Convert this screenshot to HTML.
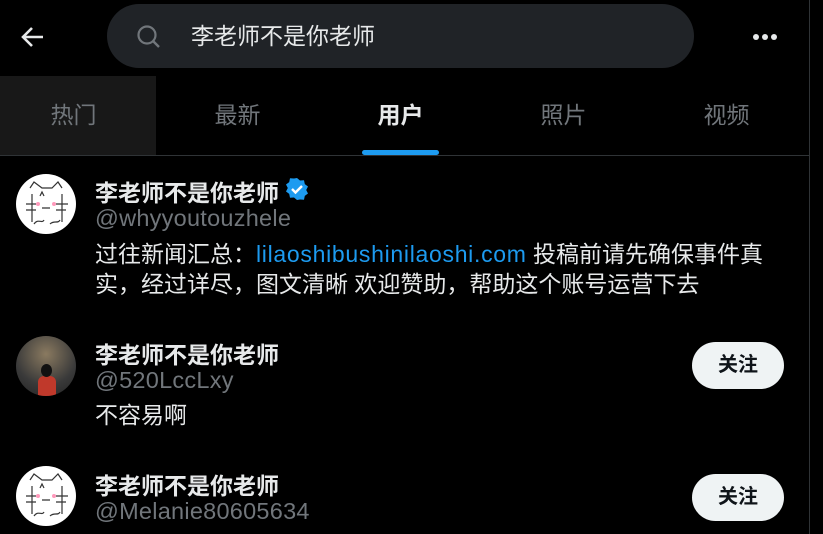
<!DOCTYPE html>
<html><head><meta charset="utf-8"><style>
*{margin:0;padding:0;box-sizing:border-box}
body{width:823px;height:534px;background:#000;overflow:hidden;position:relative;font-family:"Liberation Sans","Noto Sans CJK SC",sans-serif;color:#e7e9ea}
.abs{position:absolute}
.vline{left:809px;top:0;width:1px;height:534px;background:#2f3336}
.search{left:107px;top:4px;width:587px;height:64px;border-radius:32px;background:#202327}
.tab{top:76px;height:79px;width:163px;text-align:center;line-height:79px;font-size:23px;color:#71767b}
.hl{left:0;top:155px;width:809px;height:1px;background:#2f3336}
.name{font-weight:bold;font-size:23px;color:#e7e9ea;left:95px;white-space:nowrap}
.handle{font-size:23.5px;color:#71767b;left:95px;letter-spacing:0.25px}
.bio{font-size:23px;left:95px;line-height:30px;color:#e7e9ea;width:690px}
.av{width:60px;height:60px;border-radius:50%;left:16px;background:#fff;overflow:hidden}
.btn{left:692px;width:92px;height:47px;border-radius:24px;background:#eff3f4;color:#0f1419;font-weight:bold;font-size:20px;text-align:center;line-height:47px}
.dot{top:34px;width:6px;height:6px;border-radius:50%;background:#e7e9ea}
</style></head><body>
<div class="abs vline"></div>
<svg class="abs" style="left:20px;top:25px" width="26" height="24" viewBox="0 0 26 24"><path d="M23 12H4M12 3l-9 9 9 9" stroke="#e7e9ea" stroke-width="2.6" fill="none"/></svg>
<div class="abs search"></div>
<svg class="abs" style="left:136px;top:24px" width="26" height="26" viewBox="0 0 26 26"><circle cx="11" cy="11" r="8.5" stroke="#71767b" stroke-width="2.2" fill="none"/><path d="M17 17l6 6" stroke="#71767b" stroke-width="2.4"/></svg>
<div class="abs" style="left:191px;top:20px;font-size:23px;color:#e7e9ea;line-height:32px">李老师不是你老师</div>
<div class="abs dot" style="left:753px"></div>
<div class="abs dot" style="left:762px"></div>
<div class="abs dot" style="left:771px"></div>
<div class="abs" style="left:0;top:76px;width:156px;height:79px;background:#181818"></div>
<div class="abs tab" style="left:-8px">热门</div>
<div class="abs tab" style="left:156px">最新</div>
<div class="abs tab" style="left:319px;color:#e7e9ea;font-weight:bold">用户</div>
<div class="abs tab" style="left:482px">照片</div>
<div class="abs tab" style="left:645px">视频</div>
<div class="abs" style="left:362px;top:150px;width:77px;height:5px;border-radius:3px;background:#1d9bf0"></div>
<div class="abs hl"></div>

<div class="abs av" style="top:174px"><svg width="60" height="60" viewBox="0 0 60 60"><path d="M14 14l4-6 8 6h10l6-6 4 6M10 30h10M10 36h10M40 30h12M40 36h10M24 22l2-4 2 4M26 34h8M18 50c4-6 8 0 10-4M34 50c4-4 8 0 10-4M16 20v28M46 20v28" stroke="#333" stroke-width="1.2" fill="none"/><circle cx="22" cy="30" r="2" fill="#f9b"/><circle cx="38" cy="30" r="2" fill="#f9b"/></svg></div>
<div class="abs name" style="top:174px">李老师不是你老师</div>
<svg class="abs" style="left:285px;top:177px" width="24" height="24" viewBox="0 0 24 24"><path d="M12 1l3 2.5 4-.3.8 3.9 3.2 2.4-1.8 3.5 1.8 3.5-3.2 2.4-.8 3.9-4-.3L12 23l-3-2.5-4 .3-.8-3.9L1 14.5 2.8 11 1 7.5l3.2-2.4L5 1.2l4 .3z" fill="#1d9bf0"/><path d="M7 12l3.5 3.5L17 9" stroke="#fff" stroke-width="2.4" fill="none"/></svg>
<div class="abs handle" style="top:205px">@whyyoutouzhele</div>
<div class="abs bio" style="top:239px">过往新闻汇总：<span style="color:#1d9bf0;letter-spacing:0.7px">lilaoshibushinilaoshi.com</span> 投稿前请先确保事件真实，经过详尽，图文清晰 欢迎赞助，帮助这个账号运营下去</div>

<div class="abs av" style="top:336px;background:radial-gradient(circle at 50% 30%,#8a7a60,#3a3a3a 60%,#222)"><div class="abs" style="left:22px;top:40px;width:18px;height:20px;background:#c0392b;border-radius:6px 6px 0 0"></div><div class="abs" style="left:25px;top:28px;width:11px;height:13px;background:#111;border-radius:50%"></div></div>
<div class="abs name" style="top:336px">李老师不是你老师</div>
<div class="abs handle" style="top:367px">@520LccLxy</div>
<div class="abs bio" style="top:400px">不容易啊</div>
<div class="abs btn" style="top:342px">关注</div>

<div class="abs av" style="top:466px"><svg width="60" height="60" viewBox="0 0 60 60"><path d="M14 14l4-6 8 6h10l6-6 4 6M10 30h10M10 36h10M40 30h12M40 36h10M24 22l2-4 2 4M26 34h8M18 50c4-6 8 0 10-4M34 50c4-4 8 0 10-4M16 20v28M46 20v28" stroke="#333" stroke-width="1.2" fill="none"/><circle cx="22" cy="30" r="2" fill="#f9b"/><circle cx="38" cy="30" r="2" fill="#f9b"/></svg></div>
<div class="abs name" style="top:467px">李老师不是你老师</div>
<div class="abs handle" style="top:498px">@Melanie80605634</div>
<div class="abs btn" style="top:474px">关注</div>
</body></html>
